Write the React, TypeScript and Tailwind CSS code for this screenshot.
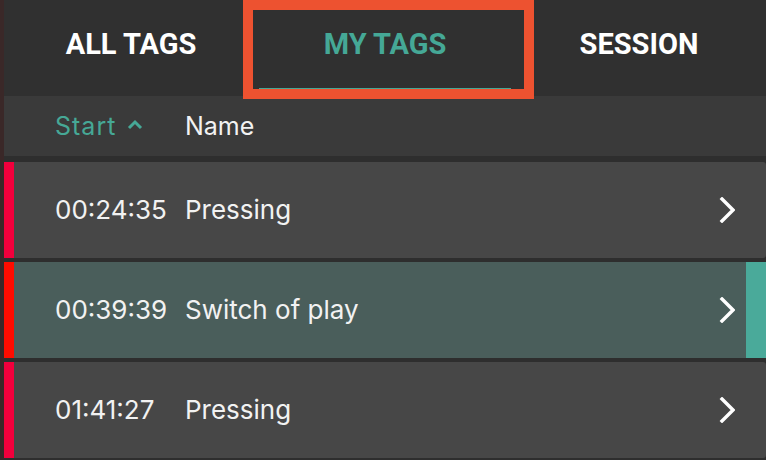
import React from "react";

const rows = [
  { time: "00:24:35", name: "Pressing", bar: "bg-[#f2003c]", selected: false },
  { time: "00:39:39", name: "Switch of play", bar: "bg-[#ff0c00]", selected: true },
  { time: "01:41:27", name: "Pressing", bar: "bg-[#f2003c]", selected: false },
];

function ChevronRight() {
  return (
    <svg width="16" height="26" viewBox="0 0 16 26" className="block">
      <polyline points="3,2 14,13 3,24" fill="none" stroke="#ffffff" strokeWidth="3.4" strokeLinecap="square" strokeLinejoin="miter" />
    </svg>
  );
}

export default function App() {
  return (
    <div className="relative w-[766px] h-[460px] bg-[#2e2e2e] flex overflow-hidden" style={{ fontFamily: "Inter, 'Noto Sans', sans-serif" }}>
      <div className="w-[4px] h-full bg-[#3a2828]" />
      <div className="flex-1 flex flex-col">
        <div className="h-[96px] bg-[#303030] grid grid-cols-3" style={{ fontFamily: "Roboto, 'Liberation Sans', sans-serif" }}>
          <div className="flex items-center justify-center pb-[8px] text-white font-bold text-[29px] leading-none">ALL TAGS</div>
          <div className="relative flex items-center justify-center pb-[8px] text-[#45a896] font-bold text-[29px] leading-none">
            MY TAGS
            <div className="absolute left-px right-px top-[88px] h-[3px] bg-[#45a896]" />
          </div>
          <div className="flex items-center justify-center pb-[8px] text-white font-bold text-[29px] leading-none">SESSION</div>
        </div>
        <div className="h-[60px] bg-[#3a3a3a] flex items-center pl-[51px] text-[25px] leading-none">
          <div className="w-[130px] flex items-center text-[#46a896]">
            <span className="tracking-[0.04em]">Start</span>
            <svg width="16" height="12" viewBox="0 0 16 12" className="ml-[11px] mb-[3px]">
              <polyline points="2,9 8,3 14,9" fill="none" stroke="#46a896" strokeWidth="3" />
            </svg>
          </div>
          <div className="text-[#f2f2f2]">Name</div>
        </div>
        <div className="mt-[6px] flex flex-col gap-[4px]">
          {rows.map((r, i) => (
            <div key={i} className={`h-[96px] flex ${r.selected ? "bg-[#4a5e5b]" : "bg-[#474747] rounded-r-[3px]"}`}>
              <div className={`w-[10px] h-full ${r.bar}`} />
              <div className="flex-1 flex items-center pl-[41px] text-[26px] leading-none text-[#f2f2f2]">
                <div className="w-[130px]">{r.time}</div>
                <div>{r.name}</div>
              </div>
              <div className="flex items-center pr-[11px]">
                <ChevronRight />
              </div>
              <div className={`w-[20px] h-full ${r.selected ? "bg-[#4aaa9a]" : ""}`} />
            </div>
          ))}
        </div>
      </div>
      <div className="absolute left-[243px] top-0 w-[291px] h-[99px] border-[10px] border-[#ed5230]" />
    </div>
  );
}
